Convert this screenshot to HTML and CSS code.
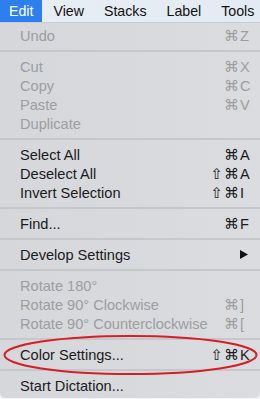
FILE: index.html
```html
<!DOCTYPE html>
<html lang="en">
<head>
    <meta charset="UTF-8">
    <title>Edit menu</title>
    <link rel="stylesheet" href="styles.css">
</head>
<body>
    <div class="menubar">
        <span class="menubar-item active">Edit</span>
        <span class="menubar-item">View</span>
        <span class="menubar-item">Stacks</span>
        <span class="menubar-item">Label</span>
        <span class="menubar-item">Tools</span>
    </div>

    <div class="menu">
        <div class="group first">
            <div class="item disabled"><span>Undo</span><span class="keys"><span class="mods">⌘</span><span class="key">Z</span></span></div>
        </div>
        <div class="sep"></div>
        <div class="group">
            <div class="item disabled"><span>Cut</span><span class="keys"><span class="mods">⌘</span><span class="key">X</span></span></div>
            <div class="item disabled"><span>Copy</span><span class="keys"><span class="mods">⌘</span><span class="key">C</span></span></div>
            <div class="item disabled"><span>Paste</span><span class="keys"><span class="mods">⌘</span><span class="key">V</span></span></div>
            <div class="item disabled"><span>Duplicate</span></div>
        </div>
        <div class="sep"></div>
        <div class="group">
            <div class="item"><span>Select All</span><span class="keys"><span class="mods">⌘</span><span class="key">A</span></span></div>
            <div class="item"><span>Deselect All</span><span class="keys"><span class="mods">⇧⌘</span><span class="key">A</span></span></div>
            <div class="item"><span>Invert Selection</span><span class="keys"><span class="mods">⇧⌘</span><span class="key">I</span></span></div>
        </div>
        <div class="sep"></div>
        <div class="group">
            <div class="item"><span>Find...</span><span class="keys"><span class="mods">⌘</span><span class="key">F</span></span></div>
        </div>
        <div class="sep"></div>
        <div class="group">
            <div class="item"><span>Develop Settings</span>
                <svg class="arrow" width="8" height="9" viewBox="0 0 8 9"><polygon points="0,0 8,4.5 0,9" fill="#111"/></svg>
            </div>
        </div>
        <div class="sep"></div>
        <div class="group">
            <div class="item disabled"><span>Rotate 180°</span></div>
            <div class="item disabled"><span>Rotate 90° Clockwise</span><span class="keys"><span class="mods">⌘</span><span class="key">]</span></span></div>
            <div class="item disabled"><span>Rotate 90° Counterclockwise</span><span class="keys"><span class="mods">⌘</span><span class="key">[</span></span></div>
        </div>
        <div class="sep"></div>
        <div class="group">
            <div class="item"><span>Color Settings...</span><span class="keys"><span class="mods">⇧⌘</span><span class="key">K</span></span></div>
        </div>
        <div class="sep"></div>
        <div class="group last">
            <div class="item"><span>Start Dictation...</span></div>
        </div>

        <!-- red highlight ring drawn over the menu -->
        <svg class="ring" width="260" height="44" viewBox="0 0 260 44">
            <ellipse cx="130.5" cy="21" rx="126" ry="19" fill="none" stroke="#d41f26" stroke-width="2"/>
        </svg>
    </div>
</body>
</html>
```

FILE: styles.css
```css
/* Základ */
body {
    margin: 0;
    width: 260px;
    height: 399px;
    overflow: hidden;
    background: #f3f4f5;
    font-family: 'Liberation Sans', Arial, 'DejaVu Sans', sans-serif;
    font-size: 14.6px;
    color: #1b1b1b;
}

/* Horní lišta */
.menubar {
    display: flex;
    gap: 2px;
    height: 22px;
    font-size: 14.2px;
    background: linear-gradient(90deg, #e8eef5, #e2eaf3);
    border-bottom: 1px solid #c9cdd2;
}
.menubar-item {
    padding: 0 9px;
    line-height: 22px;
    color: #111;
}
.menubar-item.active {
    background: #2d7ff0;
    color: #fff;
}

/* Nabídka */
.menu {
    position: relative;
    background: linear-gradient(90deg, #d5d7da, #dadcdf);
    border-radius: 0 0 5px 5px;
    padding-bottom: 3px;
}
.group {
    padding: 5px 0;
}
.group.first {
    padding-top: 3px;
}
.group.last {
    padding-bottom: 0;
}
.sep {
    height: 2px;
    background: #c5c7ca;
}
.item {
    display: flex;
    justify-content: space-between;
    align-items: center;
    height: 19px;
    padding: 0 9px 0 20px;
}
.item.disabled {
    color: #9c9ea1;
}
.keys {
    display: flex;
    align-items: center;
}
.mods {
    text-align: right;
    font-family: 'DejaVu Sans', sans-serif;
    font-size: 15px;
    letter-spacing: 1px;
}
.key {
    width: 11px;
}
.arrow {
    margin-right: 3px;
}
.ring {
    position: absolute;
    left: 0;
    top: 311px;
}
```
